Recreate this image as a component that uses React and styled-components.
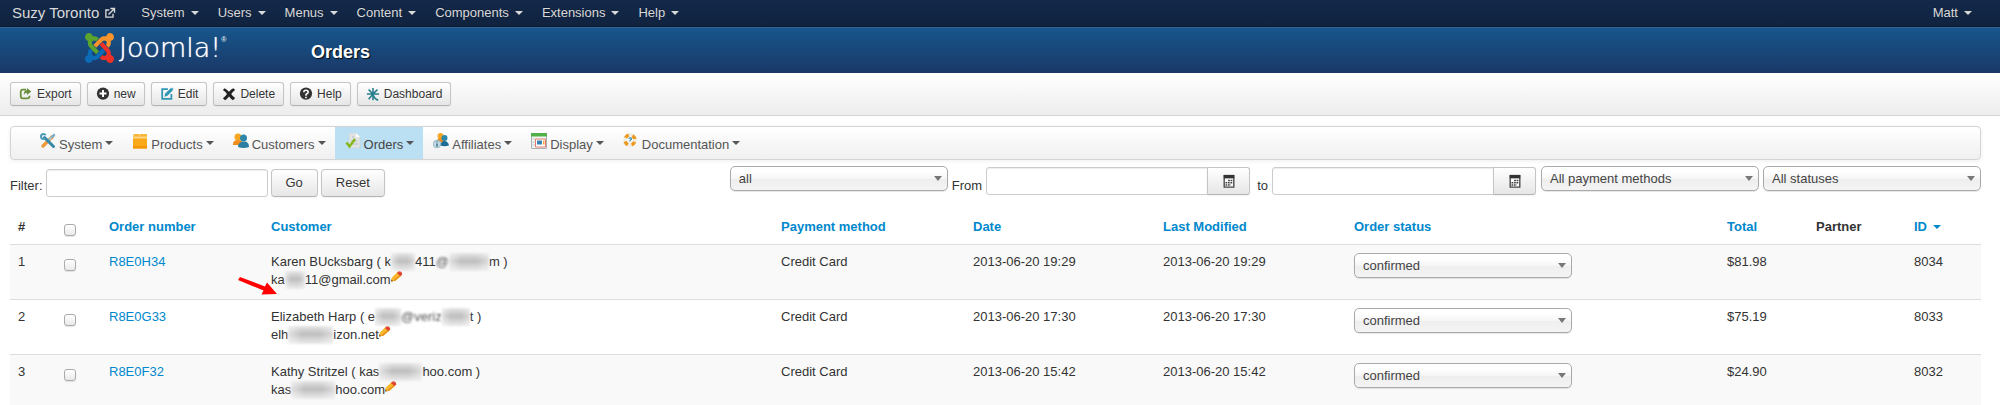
import styled, { createGlobalStyle } from 'styled-components'

const Color = {
    text: '#333',
    link: '#08c',
    border: '#ddd',
    green: '#5ba52e',
    orange: '#f9942a',
    red: '#ee3124',
    blue: '#0c6cb5',
}

const GlobalStyle = createGlobalStyle`
    * {
        box-sizing: border-box;
    }

    body {
        margin: 0;
        background: #fff;
        color: ${Color.text};
        font: 13px/18px "Helvetica Neue", Helvetica, "Liberation Sans", Arial, sans-serif;
    }

    button, input, select {
        font: inherit;
        color: inherit;
        margin: 0;
    }

    a {
        color: ${Color.link};
        text-decoration: none;
    }
`

const Caret = styled.i`
    flex: none;
    border: 4px solid transparent;
    border-top-color: ${props => props.$color || '#555'};
    border-bottom: 0;
`

/* Top bar */

const TopBar = styled.nav`
    display: flex;
    align-items: center;
    height: 27px;
    padding: 0 19px 2px 12px;
    background: linear-gradient(#13294a, #10223e);
    box-shadow: inset 0 -1px #0d1b31;
`

const SiteName = styled.a`
    display: flex;
    align-items: center;
    gap: 5px;
    margin-right: 15px;
    color: #d9d9d9;
    font-size: 15px;
`

const TopLink = styled.a`
    display: flex;
    align-items: center;
    gap: 6px;
    padding: 0 9px 0 10px;
    color: #d9d9d9;
    text-shadow: 0 -1px rgba(0, 0, 0, 0.25);
`

const UserLink = styled(TopLink)`
    margin-left: auto;
`

/* Header */

const Header = styled.header`
    display: flex;
    align-items: center;
    height: 46px;
    padding: 0 85px 6px;
    border-top: 1px solid #2d6391;
    background: linear-gradient(#17568c, #1a3867);
`

const Brand = styled.a`
    display: flex;
    align-items: center;
    gap: 5px;
    width: 226px;
    color: #fff;
`

const Wordmark = styled.span`
    font: 200 27px/30px "DejaVu Sans Light", "DejaVu Sans", sans-serif;
    text-shadow: 0 0 1px #fff;
`

const Registered = styled.sup`
    align-self: flex-start;
    margin-left: -5px;
    font-size: 7px;
    line-height: 14px;
`

const PageTitle = styled.h1`
    margin: 8px 0 0;
    color: #fff;
    font-size: 18px;
    font-weight: bold;
    line-height: 30px;
    text-shadow: 1px 1px 1px rgba(0, 0, 0, 0.8);
`

/* Toolbar */

const Toolbar = styled.div`
    display: flex;
    gap: 6px;
    height: 43px;
    padding: 9px 10px;
    border-bottom: 1px solid #d4d4d4;
    background: linear-gradient(#fff, #ededed);
`

const Button = styled.button`
    display: flex;
    align-items: center;
    justify-content: center;
    gap: 4px;
    height: 28px;
    padding: 0 14px;
    border: 1px solid #c5c5c5;
    border-bottom-color: #b3b3b3;
    border-radius: 4px;
    background: linear-gradient(#fff, #e6e6e6);
    box-shadow: 0 1px 2px rgba(0, 0, 0, 0.05);
    text-shadow: 0 1px #fff;
`

const ToolButton = styled(Button)`
    height: 24px;
    padding: 0 8px;
    border-radius: 3px;
    font-size: 12px;
`

/* Component menu */

const Content = styled.main`
    padding: 10px 19px 0 10px;
`

const MenuBar = styled.nav`
    display: flex;
    height: 34px;
    padding-left: 19px;
    border: 1px solid #d4d4d4;
    border-radius: 4px;
    background: linear-gradient(#fff, #f0f0f0);
    box-shadow: 0 1px 4px rgba(0, 0, 0, 0.07);
`

const MenuLink = styled.a`
    display: flex;
    align-items: center;
    gap: 3px;
    padding: 0 9px 0 10px;
    background: ${props => (props.$active ? '#bce0f3' : 'none')};
    color: ${props => (props.$active ? '#444' : '#555')};

    svg {
        margin-bottom: 4px;
    }

    span {
        margin-top: 3px;
    }
`

/* Filters */

const Filters = styled.form`
    display: flex;
    justify-content: space-between;
    padding-top: 6px;
    min-height: 50px;
`

const FilterGroup = styled.div`
    display: flex;
    align-items: flex-start;
    gap: 4px;
`

const SearchGroup = styled(FilterGroup)`
    padding-top: 3px;
    gap: 3px;
`

const Label = styled.label`
    padding-top: ${props => (props.$search ? '8px' : '11px')};
`

const TextInput = styled.input`
    width: 222px;
    height: 28px;
    padding: 4px 6px;
    border: 1px solid #ccc;
    border-radius: 3px;
    background: #fff;
    box-shadow: inset 0 1px 1px rgba(0, 0, 0, 0.075);
`

const DateField = styled.div`
    display: flex;
    margin-top: 1px;
    margin-right: ${props => (props.$last ? '1px' : '3px')};

    input {
        border-radius: 3px 0 0 3px;
    }

    button {
        width: 43px;
        margin-left: -1px;
        padding: 0;
        border-radius: 0 3px 3px 0;
    }
`

const SelectBox = styled.div`
    display: grid;
    width: 218px;
    height: 25px;
    align-items: center;

    select, i {
        grid-area: 1 / 1;
    }

    select {
        appearance: none;
        height: 25px;
        padding: 0 24px 0 8px;
        border: 1px solid #aaa;
        border-radius: 5px;
        background: linear-gradient(#fff 20%, #f6f6f6 50%, #eee 52%, #f4f4f4);
        box-shadow: 0 1px 1px rgba(0, 0, 0, 0.1);
        color: #444;
    }

    i {
        justify-self: end;
        margin-right: 6px;
        border-top-width: 5px;
        pointer-events: none;
    }
`

/* Orders table */

const Table = styled.table`
    width: 100%;
    border-collapse: collapse;
    table-layout: fixed;

    th, td {
        padding: 8px;
        text-align: left;
        vertical-align: top;
        white-space: nowrap;
    }

    td {
        height: 55px;
        border-top: 1px solid ${Color.border};
    }

    tbody tr:nth-child(odd) td {
        background: #f9f9f9;
    }
`

const Col = styled.col`
    width: ${props => props.$width};
`

const SortLink = styled.a`
    display: inline-flex;
    align-items: center;
    gap: 6px;
`

const Checkbox = styled.input`
    appearance: none;
    display: block;
    width: 12px;
    height: 12px;
    margin-top: 6px;
    border: 1px solid #aaa;
    border-radius: 3px;
    background: linear-gradient(#fff, #e9e9e9);
    box-shadow: 0 1px 1px rgba(0, 0, 0, 0.1);

    &:checked {
        background: ${Color.link};
    }
`

const CustomerCell = styled.td`
    position: relative;
`

const Line = styled.div`
    display: flex;
    height: 18px;
    white-space: pre;
`

const Smudge = styled.span`
    width: ${props => props.$width};
    height: 18px;
    background:
        linear-gradient(90deg, rgba(249, 249, 249, 0.6), transparent 30% 70%, rgba(249, 249, 249, 0.5)),
        linear-gradient(#e6e6e6, #bdbdbd 45%, #cfcfcf 65%, #ececec);
    filter: blur(1px);
`

const Faded = styled.span`
    color: #555;
    filter: blur(1px);
`

const Pointer = styled.svg`
    position: absolute;
    left: -25px;
    top: 31px;
`

/* Drawings */

function JoomlaMark() {
    return (
        <svg width="29" height="30" viewBox="0 32 448 448" preserveAspectRatio="none" aria-hidden="true">
            <path fill={Color.green} d="M.6 92.1C.6 58.8 27.4 32 60.4 32c30 0 54.5 21.9 59.2 50.2 32.6-7.6 67.1.6 96.5 30l-44.3 44.3c-20.5-20.5-42.6-16.3-55.4-3.5-14.3 14.3-14.3 37.9 0 52.2l99.5 99.5-44 44.3c-87.7-87.2-49.7-49.7-99.8-99.7-26.8-26.5-35-64.8-24.8-98.9C20.4 144.6.6 120.7.6 92.1z" />
            <path fill={Color.orange} d="M130.1 208.5l44.3 44.3c10-10 89.7-89.7 99.7-99.8 14.3-14.3 37.6-14.3 51.9 0 12.8 12.8 17 35-3.5 55.4l44 44.3c31.2-31.2 38.5-67.6 28.9-101.2 29.2-4.1 51.9-29.2 51.9-59.5 0-33.2-26.8-60.1-59.8-60.1-30.3 0-55.4 22.5-59.5 51.6-33.8-9.9-71.7-1.5-98.3 25.1-18.3 19.1-71.1 71.5-99.6 99.9z" />
            <path fill={Color.red} d="M396.4 360.7c8.2-32.7-.9-68.5-26.3-93.9-11.8-12.2 5 4.7-99.5-99.7l-44.3 44.3 99.7 99.7c14.3 14.3 14.3 37.6 0 51.9-12.8 12.8-35 17-55.4-3.5l-44 44.3c27.6 30.2 68 38.8 102.7 28 5.5 27.4 29.7 48.1 58.9 48.1 33 0 59.8-26.8 59.8-60.1 0-30.2-22.5-55-51.6-59.1z" />
            <path fill={Color.blue} d="M312.1 307.6l-44-44.3c-87 86.4-50.4 50.4-99.7 99.8-14.3 14.3-37.6 14.3-51.9 0-13.1-13.4-16.9-35.3 3.2-55.4l-44-44.3c-30.2 30.2-38 65.2-29.5 98.3-26.7 6-46.2 29.9-46.2 58.2C0 453.2 26.8 480 59.8 480c28.6 0 52.5-19.8 58.6-46.7 32.7 8.2 68.5-.6 94.2-26 32.1-32 12.2-12.4 99.5-99.7z" />
        </svg>
    )
}

const icons = {
    external: (
        <g fill="none" stroke="#d9d9d9" strokeWidth="1.8">
            <path d="M7 4H2.500v9.500H12V9" />
            <path d="M6 10l7-7M8.500 2H14v5.500" />
        </g>
    ),
    export: (
        <>
            <path d="M8 3H4.500Q2 3 2 5.500v5Q2 13 4.500 13h5Q12 13 12 10.500V10" fill="none" stroke="#6b8e3c" strokeWidth="2" />
            <path d="M9 1l5 4-5 4V6.500Q6.500 6.500 5.500 9 5.300 4 9 3.500z" fill="#6b8e3c" />
        </>
    ),
    add: (
        <>
            <circle cx="8" cy="7.500" r="7" fill="#333" />
            <path d="M8 3.500v8M4 7.500h8" stroke="#fff" strokeWidth="2.200" />
        </>
    ),
    edit: (
        <>
            <path d="M13 8v5.500H2.500V2.500H9" fill="none" stroke="#2f96b4" strokeWidth="2" />
            <path d="M5 11l1-3.500L12.500 1 15 3.500 8.500 10z" fill="#2f96b4" />
            <path d="M13 1.500h1.500V3" fill="none" stroke="#2f96b4" />
        </>
    ),
    remove: <path d="M3 1.500Q5.500 3 8 5.500 10.500 2.500 13 1.500L15 3.500Q12.500 5 10.500 8q2 3 4.500 4.500l-2.500 2.500Q10 13.500 8 10.800 6 13.800 3.500 15L1 12.800Q4 11 5.700 8 4 5.500 1 3.500z" fill="#222" />,
    help: (
        <>
            <circle cx="8" cy="7.500" r="7" fill="#333" />
            <path d="M5.500 6q0-2.300 2.500-2.300T10.500 6Q10.500 7 8 8.500V10M8 11v1.800" fill="none" stroke="#fff" strokeWidth="1.800" />
        </>
    ),
    dashboard: (
        <path d="M8 8L8 1M8 8L3 3M8 8L13 3M8 8H1M8 8h7M8 8l-5 6M8 8v7M8 9q2 5 6 6" fill="none" stroke="#2a7f8e" strokeWidth="1.800" />
    ),
    tools: (
        <>
            <path d="M3 13L12 4" stroke="#f09a3e" strokeWidth="3.500" strokeLinecap="round" />
            <path d="M8 8l3.500-4" stroke="#9cc5d6" strokeWidth="2" />
            <path d="M12 5l-1-2 3-2.500 1.500 1.500L13 5z" fill="#7aaec4" />
            <path d="M4.500 4.500l9 9" stroke="#3787a6" strokeWidth="3" strokeLinecap="round" />
            <circle cx="3.500" cy="3.500" r="2.500" fill="none" stroke="#4d9cb8" strokeWidth="2" strokeDasharray="12 4" strokeDashoffset="-2" />
        </>
    ),
    box: (
        <>
            <path d="M1 3l1-2h5l1 1.500V1h7v4H1z" fill="#f6b73c" />
            <path d="M1 3.500h14v12H1z" fill="#fba919" />
            <path d="M1 3.500h14v2H1z" fill="#ffd98b" />
            <path d="M1 13h14v2.500H1z" fill="#f39608" />
        </>
    ),
    people: (
        <>
            <circle cx="5" cy="4" r="3.500" fill="#f5a623" />
            <path d="M0 11q0-4 5-4t5 4v1H0z" fill="#ef8e1c" />
            <circle cx="10.500" cy="5" r="3.500" fill="#2d87ab" />
            <path d="M5 14q0-5 5.500-5.500T16 14q-5 2-11 0z" fill="#2b7fa3" />
        </>
    ),
    order: (
        <>
            <path d="M4 0h7l4 4v11H4z" fill="#dfe3e4" stroke="#c6cccd" strokeWidth="0.500" />
            <path d="M11 0v4h4z" fill="#fff" />
            <path d="M7 4h2M6 8h6M7 11h6" stroke="#b7bdbf" />
            <path d="M1.500 9.500l3 4L10 6" fill="none" stroke="#86b81b" strokeWidth="2.500" />
        </>
    ),
    affiliate: (
        <>
            <circle cx="7.500" cy="3" r="3" fill="#f5a623" />
            <path d="M4 9q0-4 3.500-4T11 9z" fill="#ef8e1c" />
            <circle cx="11.500" cy="5" r="3" fill="#2d87ab" />
            <path d="M7 12.500Q8 8 11.500 8t4.500 4.500q-4 1.500-9 0z" fill="#1d6c92" />
            <circle cx="4" cy="11" r="3.800" fill="#c4dbe4" stroke="#7fa6b5" strokeWidth="0.700" />
            <path d="M4 8.500v1M4 10.500v3" stroke="#34728c" strokeWidth="1.500" />
        </>
    ),
    display: (
        <>
            <path d="M.5 1h15v14.500H.5z" fill="#f3f5f5" stroke="#a6b2b5" />
            <path d="M0 0h16v3.500H0z" fill="#52b04b" />
            <path d="M4.500 6h10v8h-10z" fill="#fff" stroke="#e37b6c" />
            <path d="M6 7.500h5v4H6z" fill="#3684b4" />
            <path d="M12 7.500h1.500v4H12z" fill="#f1a33b" />
            <path d="M1.500 6H3.500M1.500 9H3.500M1.500 12H3.500" stroke="#b8c4c8" />
        </>
    ),
    lifebuoy: (
        <>
            <circle cx="7" cy="7" r="5" fill="none" stroke="#f1ece2" strokeWidth="3.500" />
            <circle cx="7" cy="7" r="5" fill="none" stroke="#ec9a1f" strokeWidth="3.500" strokeDasharray="4 3.854" strokeDashoffset="-2" />
            <path d="M5.500 5.500Q8.500 4 8.500 6L7 7.700V8.500" fill="none" stroke="#3c8fb0" strokeWidth="1.200" />
        </>
    ),
    calendar: (
        <>
            <path d="M2.500 2h11v13h-11z" fill="#fff" stroke="#444" strokeWidth="1.500" />
            <path d="M2 1h12v4H2z" fill="#333" />
            <path d="M7 7.500h5.500M4 10h8.500M4 12.500h6" stroke="#444" strokeWidth="1.800" strokeDasharray="2 .8" />
        </>
    ),
    pencil: (
        <>
            <path d="M0 14l1-5 8-8 5 5-8 7z" fill="#f8b72d" />
            <path d="M8 2.500L10.500 0q4 0 4.500 4.500L12.500 7z" fill="#e0402f" />
            <path d="M0 14l.500-3 2.500 2.500z" fill="#8a5c22" />
            <path d="M4 13l8.500-7" stroke="#e28a16" strokeWidth="1.500" />
        </>
    ),
}

function Icon({ name, size = 14 }) {
    return (
        <svg width={size} height={size} viewBox="0 0 16 16" aria-hidden="true">
            {icons[name]}
        </svg>
    )
}

function Select({ label, options }) {
    return (
        <SelectBox>
            <select aria-label={label}>
                {options.map(option => <option key={option}>{option}</option>)}
            </select>
            <Caret $color="#777" />
        </SelectBox>
    )
}

function DatePicker({ id, last }) {
    return (
        <DateField $last={last}>
            <TextInput id={id} type="text" />
            <Button type="button" aria-label="Pick a date">
                <Icon name="calendar" />
            </Button>
        </DateField>
    )
}

const topMenu = ['System', 'Users', 'Menus', 'Content', 'Components', 'Extensions', 'Help']

const tools = [
    ['export', 'Export'],
    ['add', 'new'],
    ['edit', 'Edit'],
    ['remove', 'Delete'],
    ['help', 'Help'],
    ['dashboard', 'Dashboard'],
]

const menu = [
    ['tools', 'System'],
    ['box', 'Products'],
    ['people', 'Customers'],
    ['order', 'Orders'],
    ['affiliate', 'Affiliates'],
    ['display', 'Display'],
    ['lifebuoy', 'Documentation'],
]

const colWidths = ['46px', '45px', '162px', 'auto', '192px', '190px', '191px', '373px', '89px', '98px', '75px']

const orders = [
    {
        number: 'R8E0H34',
        name: <>Karen BUcksbarg ( k<Smudge $width="24px" />411<Faded>@</Faded><Smudge $width="40px" />m )</>,
        email: <>ka<Smudge $width="20px" />11@gmail.com</>,
        date: '2013-06-20 19:29',
        total: '$81.98',
        id: 8034,
        pointed: true,
    },
    {
        number: 'R8E0G33',
        name: <>Elizabeth Harp ( e<Smudge $width="26px" /><Faded>@veriz</Faded><Smudge $width="28px" />t )</>,
        email: <>elh<Smudge $width="45px" />izon.net</>,
        date: '2013-06-20 17:30',
        total: '$75.19',
        id: 8033,
    },
    {
        number: 'R8E0F32',
        name: <>Kathy Stritzel ( kas<Smudge $width="43px" />hoo.com )</>,
        email: <>kas<Smudge $width="44px" />hoo.com</>,
        date: '2013-06-20 15:42',
        total: '$24.90',
        id: 8032,
    },
]

function OrderRow({ order, index }) {
    return (
        <tr>
            <td>{index}</td>
            <td><Checkbox type="checkbox" aria-label={`Select ${order.number}`} /></td>
            <td><a href="#order">{order.number}</a></td>
            <CustomerCell>
                <Line>{order.name}</Line>
                <Line>{order.email}<Icon name="pencil" size={12} /></Line>
                {order.pointed && (
                    <Pointer width="40" height="20" viewBox="0 0 40 20" aria-hidden="true">
                        <path d="M2 1L27 10.500 29 6.500 39 18 23.500 18.500 25.500 14.500 0 4z" fill="#f00" />
                    </Pointer>
                )}
            </CustomerCell>
            <td>Credit Card</td>
            <td>{order.date}</td>
            <td>{order.date}</td>
            <td><Select label={`Status of ${order.number}`} options={['confirmed', 'created', 'shipped', 'cancelled']} /></td>
            <td>{order.total}</td>
            <td />
            <td>{order.id}</td>
        </tr>
    )
}

export default function App() {
    return (
        <>
            <GlobalStyle />
            <TopBar>
                <SiteName href="#site">Suzy Toronto <Icon name="external" size={12} /></SiteName>
                {topMenu.map(item => (
                    <TopLink key={item} href="#menu">{item}<Caret $color="#d9d9d9" /></TopLink>
                ))}
                <UserLink href="#user">Matt<Caret $color="#d9d9d9" /></UserLink>
            </TopBar>
            <Header>
                <Brand href="#home">
                    <JoomlaMark />
                    <Wordmark>Joomla!</Wordmark>
                    <Registered>®</Registered>
                </Brand>
                <PageTitle>Orders</PageTitle>
            </Header>
            <Toolbar>
                {tools.map(([icon, label]) => (
                    <ToolButton key={label} type="button"><Icon name={icon} />{label}</ToolButton>
                ))}
            </Toolbar>
            <Content>
                <MenuBar>
                    {menu.map(([icon, label]) => (
                        <MenuLink key={label} href="#section" $active={label === 'Orders'}>
                            <Icon name={icon} size={16} />
                            <span>{label}</span>
                            <Caret />
                        </MenuLink>
                    ))}
                </MenuBar>
                <Filters onSubmit={event => event.preventDefault()}>
                    <SearchGroup>
                        <Label htmlFor="search" $search>Filter:</Label>
                        <TextInput id="search" type="text" />
                        <Button type="submit">Go</Button>
                        <Button type="reset">Reset</Button>
                    </SearchGroup>
                    <FilterGroup>
                        <Select label="Customers" options={['all']} />
                        <Label htmlFor="from">From</Label>
                        <DatePicker id="from" />
                        <Label htmlFor="to">to</Label>
                        <DatePicker id="to" last />
                        <Select label="Payment method" options={['All payment methods']} />
                        <Select label="Status" options={['All statuses']} />
                    </FilterGroup>
                </Filters>
                <Table>
                    <colgroup>
                        {colWidths.map((width, i) => <Col key={i} $width={width} />)}
                    </colgroup>
                    <thead>
                        <tr>
                            <th>#</th>
                            <th><Checkbox type="checkbox" aria-label="Select all" /></th>
                            <th><SortLink href="#sort">Order number</SortLink></th>
                            <th><SortLink href="#sort">Customer</SortLink></th>
                            <th><SortLink href="#sort">Payment method</SortLink></th>
                            <th><SortLink href="#sort">Date</SortLink></th>
                            <th><SortLink href="#sort">Last Modified</SortLink></th>
                            <th><SortLink href="#sort">Order status</SortLink></th>
                            <th><SortLink href="#sort">Total</SortLink></th>
                            <th>Partner</th>
                            <th><SortLink href="#sort">ID<Caret $color={Color.link} /></SortLink></th>
                        </tr>
                    </thead>
                    <tbody>
                        {orders.map((order, i) => <OrderRow key={order.id} order={order} index={i + 1} />)}
                    </tbody>
                </Table>
            </Content>
        </>
    )
}
